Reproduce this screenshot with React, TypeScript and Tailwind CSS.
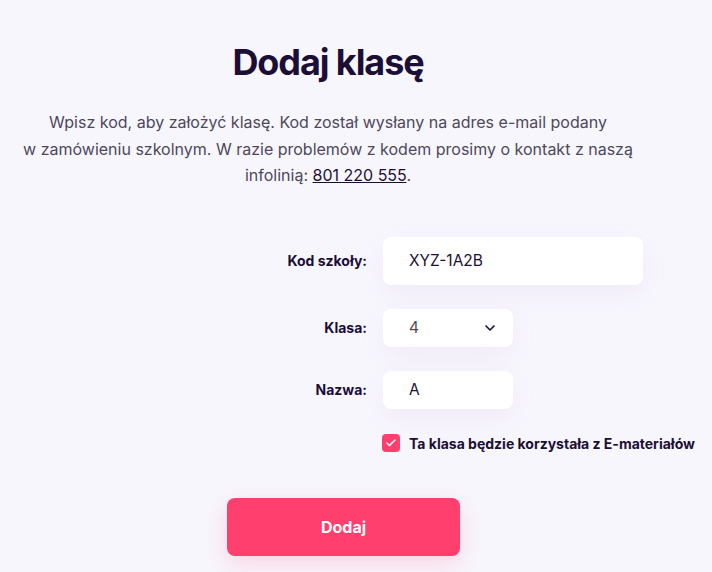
import React, { useState } from 'react';
import { ChevronDown, Check } from 'lucide-react';

const App: React.FC = () => {
  const [code, setCode] = useState('XYZ-1A2B');
  const [grade, setGrade] = useState('4');
  const [name, setName] = useState('A');
  const [eMaterials, setEMaterials] = useState(true);

  return (
    <div
      className="min-h-[572px] w-full bg-[#f8f6fd] text-[#1c0f36]"
      style={{ fontFamily: 'Inter, "Noto Sans", sans-serif' }}
    >
      <div className="w-[656px] pt-[40px] flex flex-col items-center">
        {/* Header */}
        <h1 className="text-[36px] leading-[44px] font-bold tracking-[-0.03em] text-[#1c0f36]">
          Dodaj klasę
        </h1>
        <p className="mt-[25px] text-center text-[16px] leading-[26.5px] text-[#4e485b]">
          Wpisz kod, aby założyć klasę. Kod został wysłany na adres e-mail podany
          <br />
          w zamówieniu szkolnym. W razie problemów z kodem prosimy o kontakt z naszą
          <br />
          infolinią: <a href="#" className="underline text-[#1c0f36]">801 220 555</a>.
        </p>
      </div>

      {/* Form */}
      <div className="mt-[48px] flex flex-col gap-6">
        <div className="flex items-center gap-4">
          <label className="w-[367px] text-right text-[14px] font-bold">Kod szkoły:</label>
          <input
            value={code}
            onChange={e => setCode(e.target.value)}
            className="w-[260px] h-[48px] rounded-lg bg-white px-[26px] text-[15.5px] text-[#1c0f36] outline-none shadow-[0_8px_28px_rgba(110,80,190,0.07)]"
          />
        </div>

        <div className="flex items-center gap-4">
          <label className="w-[367px] text-right text-[14px] font-bold">Klasa:</label>
          <div className="relative w-[130px] h-[38px]">
            <select
              value={grade}
              onChange={e => setGrade(e.target.value)}
              className="appearance-none w-full h-full rounded-lg bg-white pl-[26px] text-[15.5px] text-[#4e485b] outline-none shadow-[0_8px_28px_rgba(110,80,190,0.07)]"
            >
              {['1', '2', '3', '4', '5', '6', '7', '8'].map(g => (
                <option key={g} value={g}>{g}</option>
              ))}
            </select>
            <ChevronDown size={16} strokeWidth={2.5} className="absolute right-[15px] top-[11px] text-[#1c0f36] pointer-events-none" />
          </div>
        </div>

        <div className="flex items-center gap-4">
          <label className="w-[367px] text-right text-[14px] font-bold">Nazwa:</label>
          <input
            value={name}
            onChange={e => setName(e.target.value)}
            className="w-[130px] h-[38px] rounded-lg bg-white px-[26px] text-[15.5px] text-[#1c0f36] outline-none shadow-[0_8px_28px_rgba(110,80,190,0.07)]"
          />
        </div>

        <label className="flex items-center gap-[9px] pl-[382px] cursor-pointer">
          <button
            type="button"
            onClick={() => setEMaterials(!eMaterials)}
            className={`w-[18px] h-[18px] rounded-[4px] flex items-center justify-center ${eMaterials ? 'bg-[#ff3f6e]' : 'bg-white border border-gray-300'}`}
          >
            {eMaterials && <Check size={12} strokeWidth={3} className="text-white" />}
          </button>
          <span className="text-[14px] font-bold">Ta klasa będzie korzystała z E-materiałów</span>
        </label>
      </div>

      <div className="pl-[227px] mt-[44px]">
        <button className="w-[233px] h-[58px] rounded-lg bg-[#ff3f6e] text-white text-[16px] font-bold shadow-[0_8px_24px_rgba(255,63,110,0.18)]">
          Dodaj
        </button>
      </div>
    </div>
  );
};

export default App;
